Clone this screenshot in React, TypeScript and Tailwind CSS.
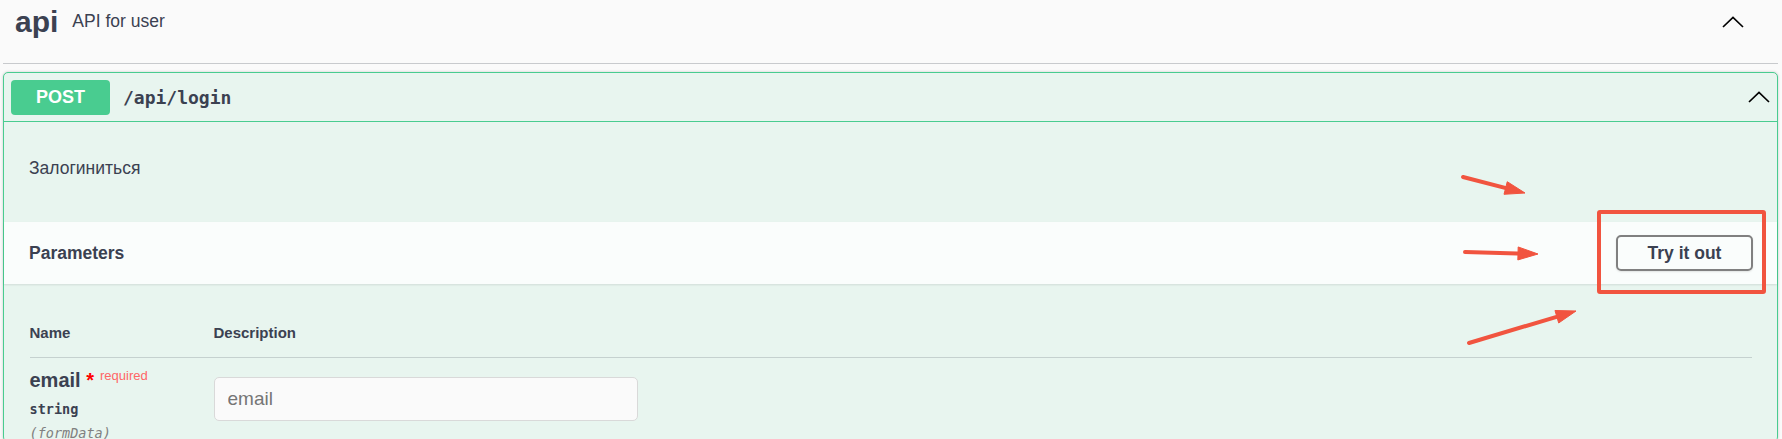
import React from 'react';

const ARROWS = [
  { x1: 1463, y1: 177, x2: 1525, y2: 193 },
  { x1: 1465, y1: 252, x2: 1538, y2: 254 },
  { x1: 1469, y1: 343, x2: 1576, y2: 311 },
];

const Chevron = () => (
  <svg width="22" height="12" viewBox="0 0 22 12" fill="none">
    <path d="M1 11 L11 1.5 L21 11" stroke="#000" strokeWidth="1.7" />
  </svg>
);

function arrowHead(a: { x1: number; y1: number; x2: number; y2: number }) {
  const dx = a.x2 - a.x1;
  const dy = a.y2 - a.y1;
  const len = Math.hypot(dx, dy);
  const ux = dx / len;
  const uy = dy / len;
  const bx = a.x2 - ux * 20;
  const by = a.y2 - uy * 20;
  const px = -uy * 6.5;
  const py = ux * 6.5;
  return `${a.x2},${a.y2} ${bx + px},${by + py} ${bx - px},${by - py}`;
}

export default function App() {
  return (
    <div className="relative h-[439px] overflow-hidden bg-[#fafafa] pl-[3px] pr-[4px] font-['Liberation_Sans',Arial,sans-serif] text-[#3b4151]">
      {/* Tag header */}
      <div className="flex h-[64px] items-center border-b border-[#c8cacd] pb-[20px] pl-[12px] pr-[34px]">
        <h3 className="text-[30px] font-bold leading-none">api</h3>
        <span className="flex-1 px-[14px] text-[17.5px]">API for user</span>
        <Chevron />
      </div>

      {/* Operation block */}
      <div className="mt-[8px] rounded-[5px] border border-[#49cc90] bg-[#e8f5ef] shadow-[0_0_3px_rgba(0,0,0,0.19)]">
        <div className="flex h-[49px] items-center border-b border-[#49cc90] pl-[7px] pr-[7px]">
          <span className="flex h-[35px] w-[99px] items-center justify-center rounded-[4px] bg-[#49cc90] text-[18px] font-bold text-white">
            POST
          </span>
          <span className="ml-[13px] flex-1 font-['DejaVu_Sans_Mono',monospace] text-[18px] font-bold">/api/login</span>
          <Chevron />
        </div>

        <div className="pb-[44px] pl-[25px] pt-[36px] text-[17.5px] leading-[20px]">Залогиниться</div>

        <div className="relative flex h-[62px] items-center justify-between bg-[#fafdfc] px-[24px] pl-[25px] shadow-[0_1px_2px_rgba(0,0,0,0.1)]">
          <h4 className="text-[17.5px] font-bold">Parameters</h4>
          <button className="h-[36px] w-[137px] rounded-[5px] border-2 border-[#808080] text-[17.5px] font-bold text-[#3b4151] shadow-[0_1px_2px_rgba(0,0,0,0.1)]">
            Try it out
          </button>
        </div>

        <div className="px-[25px] pl-[25.5px] pt-[39px]">
          <div className="flex border-b border-[#c5d1cf] pb-[14px] text-[15px] font-bold leading-[20px]">
            <div className="w-[184px]">Name</div>
            <div>Description</div>
          </div>
          <div className="flex">
            <div className="w-[184px] pt-[11px]">
              <div className="text-[20px] font-bold leading-[23px]">
                email
                <span className="text-[#ff0000]">&nbsp;*</span>
                <span className="relative top-[-7px] pl-[6px] text-[13px] font-normal text-[#f66]">required</span>
              </div>
              <div className="mt-[7px] font-['DejaVu_Sans_Mono',monospace] text-[13.5px] font-bold leading-[16px]">string</div>
              <div className="mt-[8px] font-['DejaVu_Sans_Mono',monospace] text-[13.5px] italic leading-[16px] text-[#808080]">
                (formData)
              </div>
            </div>
            <div className="pt-[19px]">
              <input
                placeholder="email"
                className="h-[44px] w-[424px] rounded-[5px] border border-[#d9d9d9] bg-[#fafafa] px-[13px] text-[19px] placeholder:text-[#757575]"
              />
            </div>
          </div>
        </div>
      </div>

      {/* Annotation overlay */}
      <div className="absolute left-[1597px] top-[210px] h-[84px] w-[169px] rounded-[3px] border-4 border-[#f1543f]" />
      <svg className="pointer-events-none absolute left-0 top-0" width="1782" height="439">
        {ARROWS.map((a, i) => (
          <g key={i} fill="#f1543f" stroke="#f1543f">
            <line x1={a.x1} y1={a.y1} x2={a.x2 - (a.x2 - a.x1) * 0.15} y2={a.y2 - (a.y2 - a.y1) * 0.15} strokeWidth="4" strokeLinecap="round" />
            <polygon points={arrowHead(a)} strokeWidth="1" strokeLinejoin="round" />
          </g>
        ))}
      </svg>
    </div>
  );
}
